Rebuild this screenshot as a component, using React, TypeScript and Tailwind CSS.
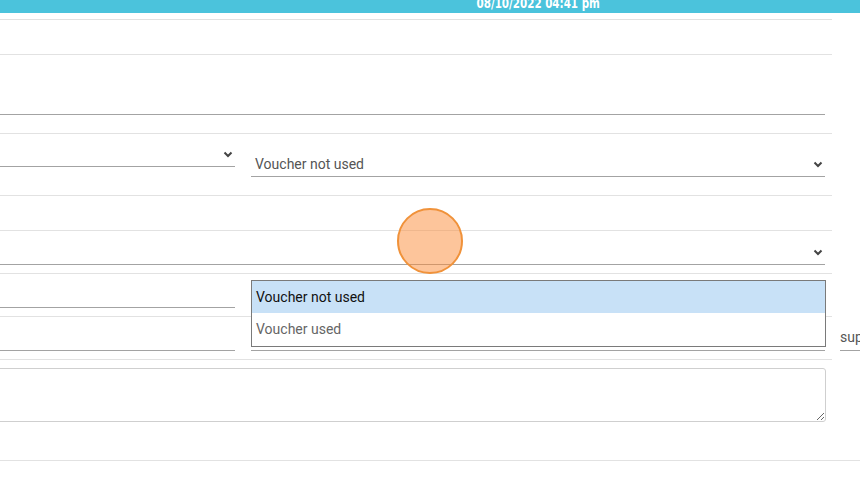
import React from "react";

const Chevron = () => (
  <svg width="10" height="7" viewBox="0 0 10 7" className="shrink-0">
    <path d="M1.5 1.5 L5 5 L8.5 1.5" fill="none" stroke="#444" strokeWidth="2" />
  </svg>
);

export default function App() {
  return (
    <div
      className="relative w-[860px] h-[481px] overflow-hidden bg-white"
      style={{ fontFamily: "Roboto, 'Liberation Sans', sans-serif" }}
    >
      {/* top bar */}
      <div className="h-[13px] w-[860px] bg-[#4bc3dc] flex justify-center overflow-hidden">
        <span
          className="ml-[216px] -mt-[4px] text-[14px] leading-[14px] font-bold text-white whitespace-nowrap scale-x-[0.82]"
          style={{ fontFamily: "'Liberation Sans Narrow', 'DejaVu Sans Condensed', sans-serif" }}
        >
          08/10/2022 04:41 pm
        </span>
      </div>

      <div className="w-[832px]">
        {/* row A */}
        <div className="h-[7px] box-border border-b border-[#e2e2e2]" />
        {/* row B */}
        <div className="h-[35px] box-border border-b border-[#e2e2e2]" />
        {/* row C */}
        <div className="h-[79px] box-border border-b border-[#e2e2e2] pt-[30px]">
          <div className="w-[825px] h-[30px] box-border border-b border-[#a3a3a3]" />
        </div>
        {/* row D */}
        <div className="h-[62px] box-border border-b border-[#e2e2e2] flex items-start gap-[16px]">
          <div className="mt-[3px] w-[235px] h-[30px] box-border border-b border-[#a3a3a3] flex items-center justify-end pr-[2px] pt-[6px]">
            <Chevron />
          </div>
          <div className="mt-[13px] w-[574px] h-[30px] box-border border-b border-[#a3a3a3] flex items-center justify-between pl-[4px] pr-[2px] pt-[5px]">
            <span className="text-[14px] text-[#555]">Voucher not used</span>
            <Chevron />
          </div>
        </div>
        {/* row E */}
        <div className="h-[35px] box-border border-b border-[#e2e2e2]" />
        {/* row F */}
        <div className="h-[43px] box-border border-b border-[#e2e2e2] pt-[4px]">
          <div className="w-[825px] h-[30px] box-border border-b border-[#a3a3a3] flex items-center justify-end pr-[2px] pt-[6px]">
            <Chevron />
          </div>
        </div>
        {/* row G */}
        <div className="h-[43px] box-border border-b border-[#e2e2e2] pt-[4px] flex gap-[16px]">
          <div className="w-[235px] h-[30px] box-border border-b border-[#a3a3a3]" />
        </div>
        {/* row H */}
        <div className="h-[43px] box-border border-b border-[#e2e2e2] pt-[4px] flex gap-[16px]">
          <div className="w-[235px] h-[30px] shrink-0 box-border border-b border-[#a3a3a3]" />
          <div className="w-[574px] h-[30px] shrink-0 box-border border-b border-[#a3a3a3]" />
          <div className="w-[40px] h-[30px] shrink-0 box-border border-b border-[#a3a3a3] flex items-center pt-[4px] -ml-[1px]">
            <span className="text-[14px] text-[#555]">sup</span>
          </div>
        </div>
      </div>
      {/* row I */}
      <div className="w-[860px] h-[101px] box-border border-b border-[#e2e2e2] pt-[8px]">
        <textarea
          className="block -ml-[4px] w-[830px] h-[54px] box-border border border-[#cfcfcf] rounded-[3px] resize-y bg-white"
          defaultValue=""
        />
      </div>

      {/* open select popup */}
      <div className="absolute left-[251px] top-[280px] w-[575px] h-[67px] box-border border border-[#7a7a7a] bg-white text-[14px]">
        <div className="h-[32px] bg-[#c8e1f7] text-[#111] pl-[4px] flex items-center pt-[1px]">Voucher not used</div>
        <div className="h-[33px] text-[#666] pl-[4px] flex items-center">Voucher used</div>
      </div>

      {/* click marker */}
      <div className="absolute left-[397px] top-[208px] w-[66px] h-[66px] rounded-full box-border border-2 border-[#f0923a] bg-[rgba(251,139,55,0.5)]" />
    </div>
  );
}
